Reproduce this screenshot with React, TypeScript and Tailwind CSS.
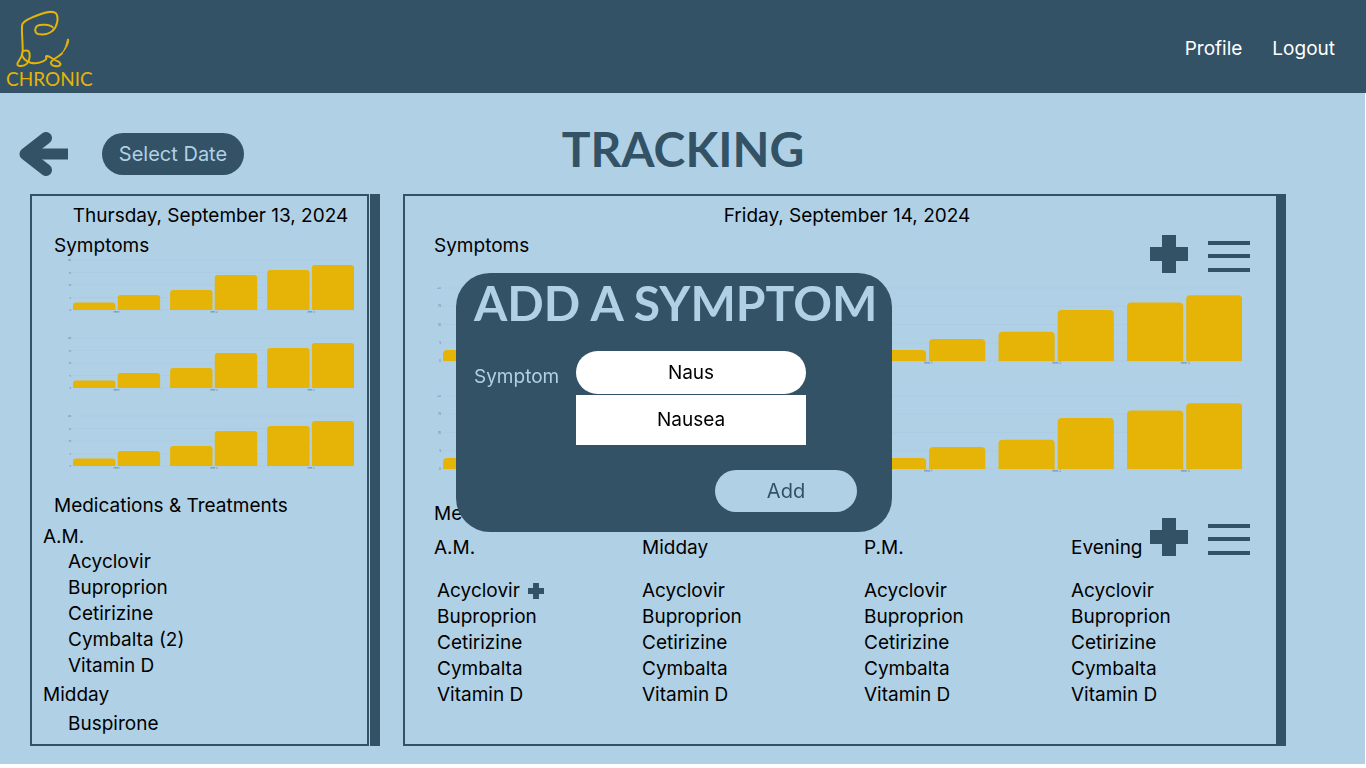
import type { ReactNode } from "react";

const MEDICATIONS = ["Acyclovir", "Buproprion", "Cetirizine", "Cymbalta", "Vitamin D"];
const DATA = [3, 6, 8, 14, 16, 18];
const TICKS = [20, 15, 10, 5, 0];

function Logo() {
  return (
    <a href="#home" className="flex flex-col text-[#e5b407]">
      <svg viewBox="0 0 270 180" className="h-15 w-[90px]" fill="none" stroke="currentColor" strokeWidth="6" strokeLinecap="round" strokeLinejoin="round" aria-hidden="true">
        <path d="M140 52C132 43 103 42 93 48C85 55 86 69 96 72C112 75 130 70 139 63C155 49 158 23 151 11C143 2 119 7 105 12C85 19 54 30 49 43C45 55 51 97 50 123C49 147 34 154 34 162C34 171 54 170 63 161C72 151 73 131 68 124C62 119 49 121 48 131C47 143 60 154 74 158C92 162 111 157 120 148C123 143 117 140 122 138C130 137 140 148 151 152C165 157 167 165 158 168C146 170 133 167 135 157C137 148 156 143 168 130" />
        <path strokeWidth="3" fill="currentColor" d="M168 130C178 118 181 102 185 87L188 88C189 101 180 115 168 130Z" />
      </svg>
      <span className="-mt-1 font-['Lato',sans-serif] text-[19px] leading-[26px]">CHRONIC</span>
    </a>
  );
}

function PlusIcon({ className }: { className: string }) {
  return (
    <svg viewBox="0 0 38 38" className={className} fill="currentColor" aria-hidden="true">
      <path d="M12 0H26V12H38V26H26V38H12V26H0V12H12Z" />
    </svg>
  );
}

function Actions({ name }: { name: string }) {
  return (
    <div className="flex gap-5 text-[#335265]">
      <button type="button" aria-label={`Add to ${name}`}>
        <PlusIcon className="size-[38px]" />
      </button>
      <button type="button" aria-label={`${name} menu`}>
        <svg viewBox="0 0 42 38" className="h-[38px] w-[42px]" fill="currentColor" aria-hidden="true">
          <path d="M0 6h42v4H0zM0 19h42v4H0zM0 33h42v4H0z" />
        </svg>
      </button>
    </div>
  );
}

function BarChart({ width, height, scale = true }: { width: number; height: number; scale?: boolean }) {
  const bar = width * 0.151;
  const pitch = width * 0.3455;
  const pair = width * 0.159;
  const radius = width / 90;
  const font = width > 300 ? 3 : 2.5;
  return (
    <svg viewBox={`-6 -1 ${width + 6} ${height + 6}`} className="block w-full" role="img" aria-label="Symptom severity">
      {TICKS.map((tick) => {
        const y = height * (1 - tick / 20);
        return (
          <g key={tick}>
            <path d={`M0 ${y}H${width}`} stroke="#a9cae0" strokeWidth="0.6" />
            {scale && (
              <text x="-2" y={y + 1} textAnchor="end" fontSize={font} fill="#335265" fillOpacity="0.8">
                {tick}
              </text>
            )}
          </g>
        );
      })}
      {DATA.map((value, i) => {
        const x = Math.floor(i / 2) * pitch + (i % 2) * pair;
        const h = (height * value) / 20;
        return (
          <path
            key={value}
            d={`M${x} ${height}v${radius - h}q0 ${-radius} ${radius} ${-radius}h${bar - 2 * radius}q${radius} 0 ${radius} ${radius}V${height}z`}
            fill="#e5b407"
          />
        );
      })}
      {[1, 2, 3].map((n) => (
        <text key={n} x={(n - 1) * pitch + pair - 1} y={height + 3.2} textAnchor="middle" fontSize={font} fill="#335265" fillOpacity="0.8">
          Item {n}
        </text>
      ))}
    </svg>
  );
}

function MedList({ className, items, extra }: { className?: string; items: string[]; extra?: ReactNode }) {
  return (
    <ul className={className}>
      {items.map((item, i) => (
        <li key={item} className="flex items-center gap-2">
          {item}
          {i === 0 && extra}
        </li>
      ))}
    </ul>
  );
}

export default function App() {
  return (
    <div className="flex min-h-screen flex-col bg-white pb-1 font-['Inter',sans-serif] text-[19px] leading-[26px] text-black">
      <header className="flex items-center justify-between bg-[#335265] pr-[31px] pl-1.5">
        <div className="pt-2.5 pb-px">
          <Logo />
        </div>
        <nav className="flex gap-[30px] pt-1 text-white">
          <a href="#profile">Profile</a>
          <a href="#logout">Logout</a>
        </nav>
      </header>

      <main className="mr-px flex flex-1 flex-col bg-[#b0d1e5] pr-[79px] pb-[18px] pl-[30px]">
        <div className="-ml-3 grid grid-cols-[1fr_auto_1fr] items-center pt-[31px] pb-2.5">
          <div className="flex items-center gap-8">
            <button type="button" aria-label="Back" className="text-[#335265]">
              <svg viewBox="0 0 52 46" className="h-[46px] w-[52px]" fill="none" stroke="currentColor" strokeWidth="12" strokeLinejoin="round" aria-hidden="true">
                <path d="M28 7 7.500 23 28 39" strokeLinecap="round" />
                <path d="M10 23H50" strokeWidth="11" />
              </svg>
            </button>
            <button type="button" className="h-[42px] w-[142px] rounded-full bg-[#335265] text-[20px] text-[#b0d1e5]">
              Select Date
            </button>
          </div>
          <h1 className="pt-px pb-3 pl-[62px] font-['Lato',sans-serif] text-[48px] leading-[47px] font-bold text-[#335265]">TRACKING</h1>
        </div>

        <div className="flex flex-1 gap-[23px]">
          <section className="flex w-[350px] shrink-0 gap-px">
            <div className="flex-1 border-2 border-[#335265] pt-[7px]">
              <h2 className="pl-[22px] text-center">Thursday, September 13, 2024</h2>
              <h3 className="mt-1 pl-[22px]">Symptoms</h3>
              <div className="flex flex-col gap-[22px] pr-[13px] pl-[35px]">
                <BarChart width={281} height={50} />
                <BarChart width={281} height={50} />
                <BarChart width={281} height={50} />
              </div>
              <h3 className="mt-[22px] pl-[22px]">Medications &amp; Treatments</h3>
              <h4 className="mt-1.5 pl-[11px] leading-6">A.M.</h4>
              <MedList className="pl-9" items={["Acyclovir", "Buproprion", "Cetirizine", "Cymbalta (2)", "Vitamin D"]} />
              <h4 className="mt-1 pl-[11px] leading-6">Midday</h4>
              <MedList className="mt-1 pl-9" items={["Buspirone"]} />
            </div>
            <div className="w-2.5 bg-[#335265]" />
          </section>

          <section className="min-w-0 flex-1 border-2 border-r-10 border-[#335265] pt-[7px] pl-[29px]">
            <h2 className="pr-4 text-center">Friday, September 14, 2024</h2>
            <div className="flex items-start justify-between pr-[26px]">
              <h3 className="pt-1">Symptoms</h3>
              <div className="pt-1.5">
                <Actions name="symptoms" />
              </div>
            </div>
            <div className="mt-3.5 grid grid-cols-2 gap-x-[49px] gap-y-[29px] pr-[34px] pl-[3px]">
              {[0, 1, 2, 3].map((n) => (
                <BarChart key={n} width={372} height={73} scale={n % 2 === 0} />
              ))}
            </div>
            <div className="mt-[27px] flex items-center justify-between pr-[26px]">
              <div>
                <h3>Medications &amp; Treatments</h3>
                <div className="mt-2 grid grid-cols-[208px_222px_207px_auto]">
                  <h4>A.M.</h4>
                  <h4>Midday</h4>
                  <h4>P.M.</h4>
                  <h4>Evening</h4>
                </div>
              </div>
              <div className="pt-3">
                <Actions name="medications" />
              </div>
            </div>
            <div className="mt-[17px] grid grid-cols-[208px_222px_207px_auto]">
              <MedList
                className="pl-[3px]"
                items={MEDICATIONS}
                extra={
                  <button type="button" aria-label="Add Acyclovir dose" className="text-[#335265]">
                    <PlusIcon className="size-4" />
                  </button>
                }
              />
              <MedList items={MEDICATIONS} />
              <MedList items={MEDICATIONS} />
              <MedList items={MEDICATIONS} />
            </div>
          </section>
        </div>
      </main>

      <div className="fixed inset-0 flex items-center justify-center pt-[37px] pr-[18px]">
        <div role="dialog" aria-labelledby="dialog-title" className="w-[436px] rounded-[34px] bg-[#335265] px-[18px] pb-5 text-[#b0d1e5]">
          <h2 id="dialog-title" className="text-center font-['Lato',sans-serif] text-[48px] leading-[60px] font-bold whitespace-nowrap">
            ADD A SYMPTOM
          </h2>
          <form className="pt-[18px]">
            <div className="flex gap-[18px]">
              <label htmlFor="symptom" className="w-[84px] pt-[13px]">Symptom</label>
              <div className="flex w-[230px] flex-col gap-px text-black">
                <input id="symptom" type="text" defaultValue="Naus" className="h-[43px] w-full rounded-full bg-white text-center outline-none" />
                <button type="button" className="h-[50px] bg-white">Nausea</button>
              </div>
            </div>
            <div className="flex justify-end pt-[25px] pr-[17px]">
              <button type="button" className="h-[42px] w-[142px] rounded-full bg-[#b0d1e5] text-[20px] text-[#335265]">
                Add
              </button>
            </div>
          </form>
        </div>
      </div>
    </div>
  );
}
